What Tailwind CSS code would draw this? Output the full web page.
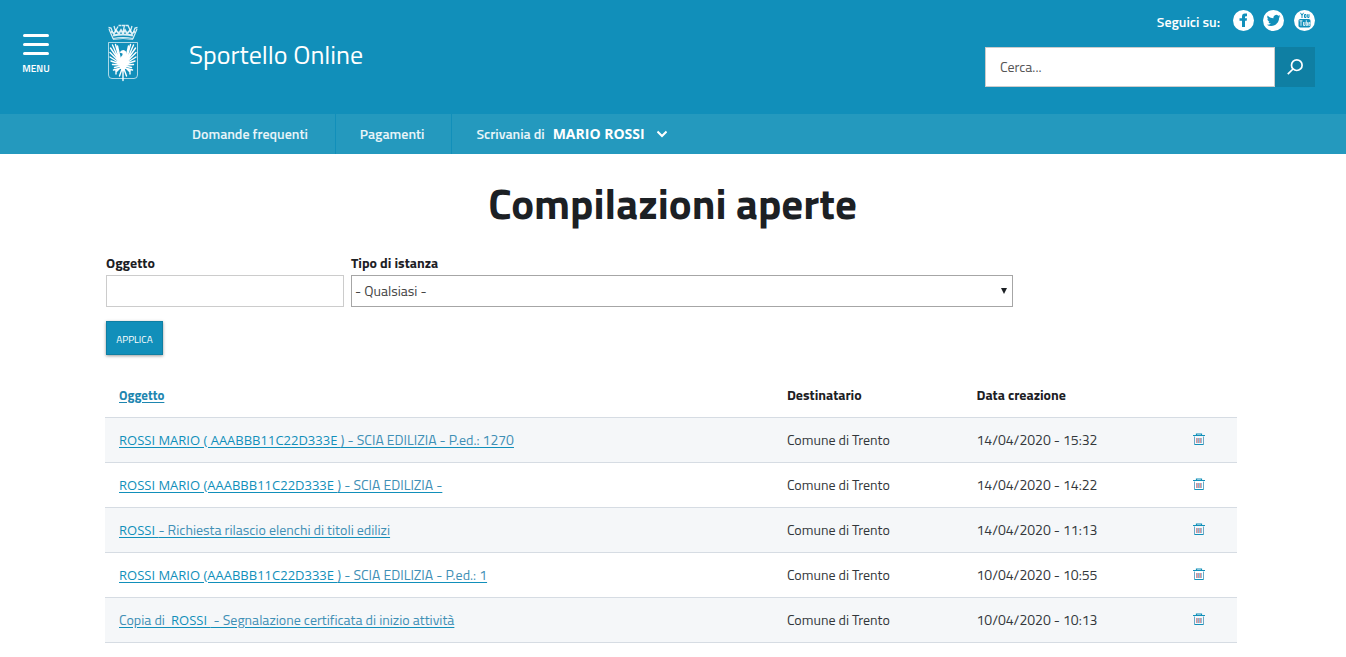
<!DOCTYPE html>
<html lang="it">
<head>
<meta charset="utf-8">
<meta name="viewport" content="width=device-width, initial-scale=1">
<title>Sportello Online - Compilazioni aperte</title>
<script src="https://cdn.jsdelivr.net/npm/@tailwindcss/browser@4"></script>
</head>
<body class="bg-white font-['Titillium_Web',Roboto,sans-serif] text-sm text-[#1c2024]">
<svg class="hidden" aria-hidden="true">
  <symbol id="trash" viewBox="0 0 12 13">
    <path d="M1.500 3.500V11.500M10.500 3.500V11.500" stroke="#6aa9c8" fill="none"/>
    <path d="M3.500 5V10M5.500 5V10M7.500 5V10" stroke="#d9929a" fill="none"/>
    <path d="M4.500 5V10M6.500 5V10M8.500 5V10" stroke="#8fc0d8" fill="none"/>
    <path d="M0 2.500H12M3.500 2.500V1H8.500V2.500M1.500 11.500H10.500" stroke="#1190ba" stroke-width="1.200" fill="none"/>
  </symbol>
</svg>

<header>
  <div class="flex h-[114px] items-start bg-[#118fba] pl-[22px] pr-[31px] text-white">
    <button type="button" class="mt-[34px] flex w-7 flex-col items-center">
      <span class="flex flex-col gap-[6px]">
        <span class="block h-[3px] w-[26px] rounded-sm bg-white"></span>
        <span class="block h-[3px] w-[26px] rounded-sm bg-white"></span>
        <span class="block h-[3px] w-[26px] rounded-sm bg-white"></span>
      </span>
      <span class="mt-2 text-[10px] leading-3 font-semibold">MENU</span>
    </button>

    <a href="#" class="mt-6 ml-[57px] flex items-center" aria-label="Sportello Online">
      <svg class="h-[58px] w-8" viewBox="0 0 32 58" fill="none" stroke="#fff">
        <g stroke-opacity=".85">
          <path d="M1.500 3.500L4 4L5.500 8M7 2L8.500 7L11 2.500M11.500 1.500H14M14.500 1.500H17.500L16 8M18.500 1.500H21L23.500 7L25 2M26.500 8L28 4L30.500 3.500" stroke-width="1.300"/>
          <path d="M2 5L6 14.500Q16 12.500 26 14.500L30 5" stroke-width="1.200"/>
          <path d="M4 7.500L7 9.500L9 6.500L12 9.500L14 6L16 9.500L18 6L20 9.500L23 6.500L25 9.500L28 7.500M6 11.500Q16 9.500 26 11.500" stroke-width="1.800"/>
          <path d="M6 15.500Q16 13.500 26 15.500" stroke-opacity=".7"/>
        </g>
        <path d="M1.500 18.500H30.500V51Q30.500 54.500 27 54.500H5Q1.500 54.500 1.500 51Z" stroke-opacity=".65"/>
        <g stroke-width="1.400" stroke-linecap="round">
          <path d="M12.500 37L3.500 24M12.500 37L5.500 21M13 37L8.500 20.500M13.500 36L10.500 22M12.500 38L3 28.500M12.500 39L3 33M13 40L4 37M13.500 41L5.500 40.500M14 42L7.500 43.500"/>
          <path d="M19.500 37L28.500 24M19.500 37L26.500 21M19 37L23.500 20.500M18.500 36L21.500 22M19.500 38L29 28.500M19.500 39L29 33M19 40L28 37M18.500 41L26.500 40.500M18 42L24.500 43.500"/>
          <path d="M14 43L9 48M14 44L6.500 46M9 46V50M18 43L23 48M18 44L25.500 46M23 46V50M15 45L12.500 52M17 45L19.500 52M16 43V56.500"/>
        </g>
        <path d="M12.500 28.500L14.500 26.500Q17 25 19 27.500Q20 29 19 31L20.500 36L18.500 44L16 48L13.500 44L11.500 36L15.500 31V29.500Z" fill="#fff" stroke="none"/>
      </svg>
      <span class="ml-[50px] pt-1 text-[26px] leading-8">Sportello Online</span>
    </a>

    <div class="ml-auto w-[330px]">
      <div class="mt-[10px] flex items-start justify-end">
        <span class="mr-[13px] text-[14px] leading-6 font-semibold">Seguici su:</span>
        <div class="flex gap-[9px]">
          <a href="#" aria-label="Facebook"><svg class="size-[21px]" viewBox="0 0 21 21"><circle cx="10.500" cy="10.500" r="10.500" fill="#fff"/><path d="M9 17V10.800H6.500V8.200H9V6.500Q9 3.500 11.800 3.500H14V6.300H12.800Q12 6.300 12 7.100V8.200H14L13.700 10.800H12V17Z" fill="#118fba"/></svg></a>
          <a href="#" aria-label="Twitter"><svg class="size-[21px]" viewBox="0 0 21 21"><circle cx="10.500" cy="10.500" r="10.500" fill="#fff"/><path transform="translate(3.800 3.600) scale(.57)" d="M23.950 4.570a10 10 0 0 1-2.820.77 4.960 4.960 0 0 0 2.160-2.720c-.95.550-2 .95-3.130 1.180a4.920 4.920 0 0 0-8.380 4.480C7.690 8.100 4.070 6.130 1.640 3.160a4.920 4.920 0 0 0 1.520 6.570 4.900 4.900 0 0 1-2.230-.61v.06a4.920 4.920 0 0 0 3.950 4.830 5 5 0 0 1-2.210.08 4.940 4.940 0 0 0 4.600 3.420A9.870 9.870 0 0 1 0 19.540a14 14 0 0 0 7.550 2.210c9.050 0 14-7.500 14-13.980v-.64a10 10 0 0 0 2.400-2.560z" fill="#118fba"/></svg></a>
          <a href="#" aria-label="YouTube" class="ml-px"><svg class="size-[21px]" viewBox="0 0 21 21"><circle cx="10.500" cy="10.500" r="10.500" fill="#fff"/><path d="M6.500 2.800L8 5.500L9.500 2.800M8 5.500V8M10.500 4.500v3h1.500v-3zM13.700 4.200V7.500H15V4.200" fill="none" stroke="#118fba"/><rect x="4.500" y="9" width="12" height="8.500" rx="1.800" fill="#118fba"/><path d="M5.500 10.800H8.500M7 10.800V15.800M9.500 12V15.500H11V12M12.300 10.200V15.500H13.500V12.500H12.500M15.700 15.500H14.800V12.500H15.800V14H15" fill="none" stroke="#fff" stroke-width=".8"/></svg></a>
        </div>
      </div>
      <form class="mt-[13px] flex h-10">
        <input type="search" aria-label="Cerca" placeholder="Cerca..." class="min-w-0 flex-1 border border-[#ccc] bg-white px-[14px] text-[14px] text-[#555] placeholder:text-[#555]">
        <button type="button" aria-label="Avvia ricerca" class="flex w-10 items-center justify-center bg-[#0f7fa3]">
          <svg class="size-4" viewBox="0 0 16 16" fill="none" stroke="#fff" stroke-width="1.700"><circle cx="9.800" cy="6.200" r="5.300"/><path d="M6 10L.8 15.200"/></svg>
        </button>
      </form>
    </div>
  </div>

  <nav class="flex h-10 bg-[#2499be] pl-[168px] text-[14px] font-semibold text-white/90">
    <a href="#" class="flex items-center border-r border-[#118fba] pr-[27px] pl-6">Domande frequenti</a>
    <a href="#" class="flex items-center border-r border-[#118fba] pr-[27px] pl-6">Pagamenti</a>
    <button type="button" class="flex items-center px-6">Scrivania di<span class="ml-2 font-['Open_Sans',sans-serif] text-[14px] font-bold text-white">MARIO ROSSI</span>
      <svg class="ml-3 h-2 w-[10px]" viewBox="0 0 10 8" fill="none" stroke="#fff" stroke-width="2"><path d="M.5 1.500L5 6L9.500 1.500"/></svg>
    </button>
  </nav>
</header>

<main class="pr-[109px] pl-[105px]">
  <h1 class="pt-[25px] pl-[3px] text-center text-[43px] leading-12 font-bold">Compilazioni aperte</h1>

  <form class="mt-[25px] pl-px">
    <div class="flex gap-[7px]">
      <div class="flex w-[238px] flex-col">
        <label for="oggetto" class="pb-px text-[14px] leading-[22px] font-bold">Oggetto</label>
        <input id="oggetto" type="text" class="h-8 border border-[#ccc] px-1">
      </div>
      <div class="flex w-[662px] flex-col">
        <label for="tipo" class="pb-px text-[14px] leading-[22px] font-bold">Tipo di istanza</label>
        <div class="relative">
          <select id="tipo" class="h-8 w-full appearance-none border border-[#a6a6a6] bg-white px-[3px] text-[14px] text-[#444]"><option>- Qualsiasi -</option></select>
          <svg class="pointer-events-none absolute top-[13px] right-[6px] h-[6px] w-[6px]" viewBox="0 0 6 6"><path d="M0 0H6L3 6Z" fill="#1c2024"/></svg>
        </div>
      </div>
    </div>
    <button type="button" class="mt-[14px] h-[34px] w-[57px] border border-[#0f7fa3] bg-[#118fba] pt-1 text-[10px] text-white shadow-[0_1px_3px_rgba(0,0,0,0.4)]">APPLICA</button>
  </form>

  <table class="mt-[18px] w-full table-fixed border-collapse text-left">
    <colgroup><col class="w-[59%]"><col class="w-[16.750%]"><col class="w-[19.200%]"><col></colgroup>
    <thead>
      <tr class="h-11 border-b border-[#d6dce3]">
        <th class="px-[14px]"><a href="#" class="text-[13px] text-[#1e86b0] underline underline-offset-2">Oggetto</a></th>
        <th class="px-[14px]">Destinatario</th>
        <th class="px-[14px]">Data creazione</th>
        <td></td>
      </tr>
    </thead>
    <tbody class="text-[#33373b]">
      <tr class="h-[45px] border-b border-[#d6dce3] bg-[#f5f7f9]">
        <td class="px-[14px]"><a href="#" class="whitespace-pre text-[#3f8fb5] underline decoration-[#118fba] underline-offset-2"><span class="font-['Open_Sans',sans-serif] text-[13px] text-[#118fba]">ROSSI MARIO ( AAABBB11C22D333E </span>) - SCIA EDILIZIA - P.ed.: 1270</a></td>
        <td class="px-[14px]">Comune di Trento</td><td class="px-[14px]">14/04/2020 - 15:32</td>
        <td class="px-[13px]"><a href="#" aria-label="Elimina" class="block w-3"><svg class="h-[13px] w-3"><use href="#trash"/></svg></a></td>
      </tr>
      <tr class="h-[45px] border-b border-[#d6dce3]">
        <td class="px-[14px]"><a href="#" class="whitespace-pre text-[#3f8fb5] underline decoration-[#118fba] underline-offset-2"><span class="font-['Open_Sans',sans-serif] text-[13px] text-[#118fba]">ROSSI MARIO (AAABBB11C22D333E </span>) - SCIA EDILIZIA -</a></td>
        <td class="px-[14px]">Comune di Trento</td><td class="px-[14px]">14/04/2020 - 14:22</td>
        <td class="px-[13px]"><a href="#" aria-label="Elimina" class="block w-3"><svg class="h-[13px] w-3"><use href="#trash"/></svg></a></td>
      </tr>
      <tr class="h-[45px] border-b border-[#d6dce3] bg-[#f5f7f9]">
        <td class="px-[14px]"><a href="#" class="whitespace-pre text-[#3f8fb5] underline decoration-[#118fba] underline-offset-2"><span class="font-['Open_Sans',sans-serif] text-[13px] text-[#118fba]">ROSSI </span>- Richiesta rilascio elenchi di titoli edilizi</a></td>
        <td class="px-[14px]">Comune di Trento</td><td class="px-[14px]">14/04/2020 - 11:13</td>
        <td class="px-[13px]"><a href="#" aria-label="Elimina" class="block w-3"><svg class="h-[13px] w-3"><use href="#trash"/></svg></a></td>
      </tr>
      <tr class="h-[45px] border-b border-[#d6dce3]">
        <td class="px-[14px]"><a href="#" class="whitespace-pre text-[#3f8fb5] underline decoration-[#118fba] underline-offset-2"><span class="font-['Open_Sans',sans-serif] text-[13px] text-[#118fba]">ROSSI MARIO (AAABBB11C22D333E </span>) - SCIA EDILIZIA - P.ed.: 1</a></td>
        <td class="px-[14px]">Comune di Trento</td><td class="px-[14px]">10/04/2020 - 10:55</td>
        <td class="px-[13px]"><a href="#" aria-label="Elimina" class="block w-3"><svg class="h-[13px] w-3"><use href="#trash"/></svg></a></td>
      </tr>
      <tr class="h-[45px] border-b border-[#d6dce3] bg-[#f5f7f9]">
        <td class="px-[14px]"><a href="#" class="whitespace-pre text-[#3f8fb5] underline decoration-[#118fba] underline-offset-2">Copia di  <span class="font-['Open_Sans',sans-serif] text-[13px] text-[#118fba]">ROSSI </span> - Segnalazione certificata di inizio attività</a></td>
        <td class="px-[14px]">Comune di Trento</td><td class="px-[14px]">10/04/2020 - 10:13</td>
        <td class="px-[13px]"><a href="#" aria-label="Elimina" class="block w-3"><svg class="h-[13px] w-3"><use href="#trash"/></svg></a></td>
      </tr>
    </tbody>
  </table>
</main>
</body>
</html>
